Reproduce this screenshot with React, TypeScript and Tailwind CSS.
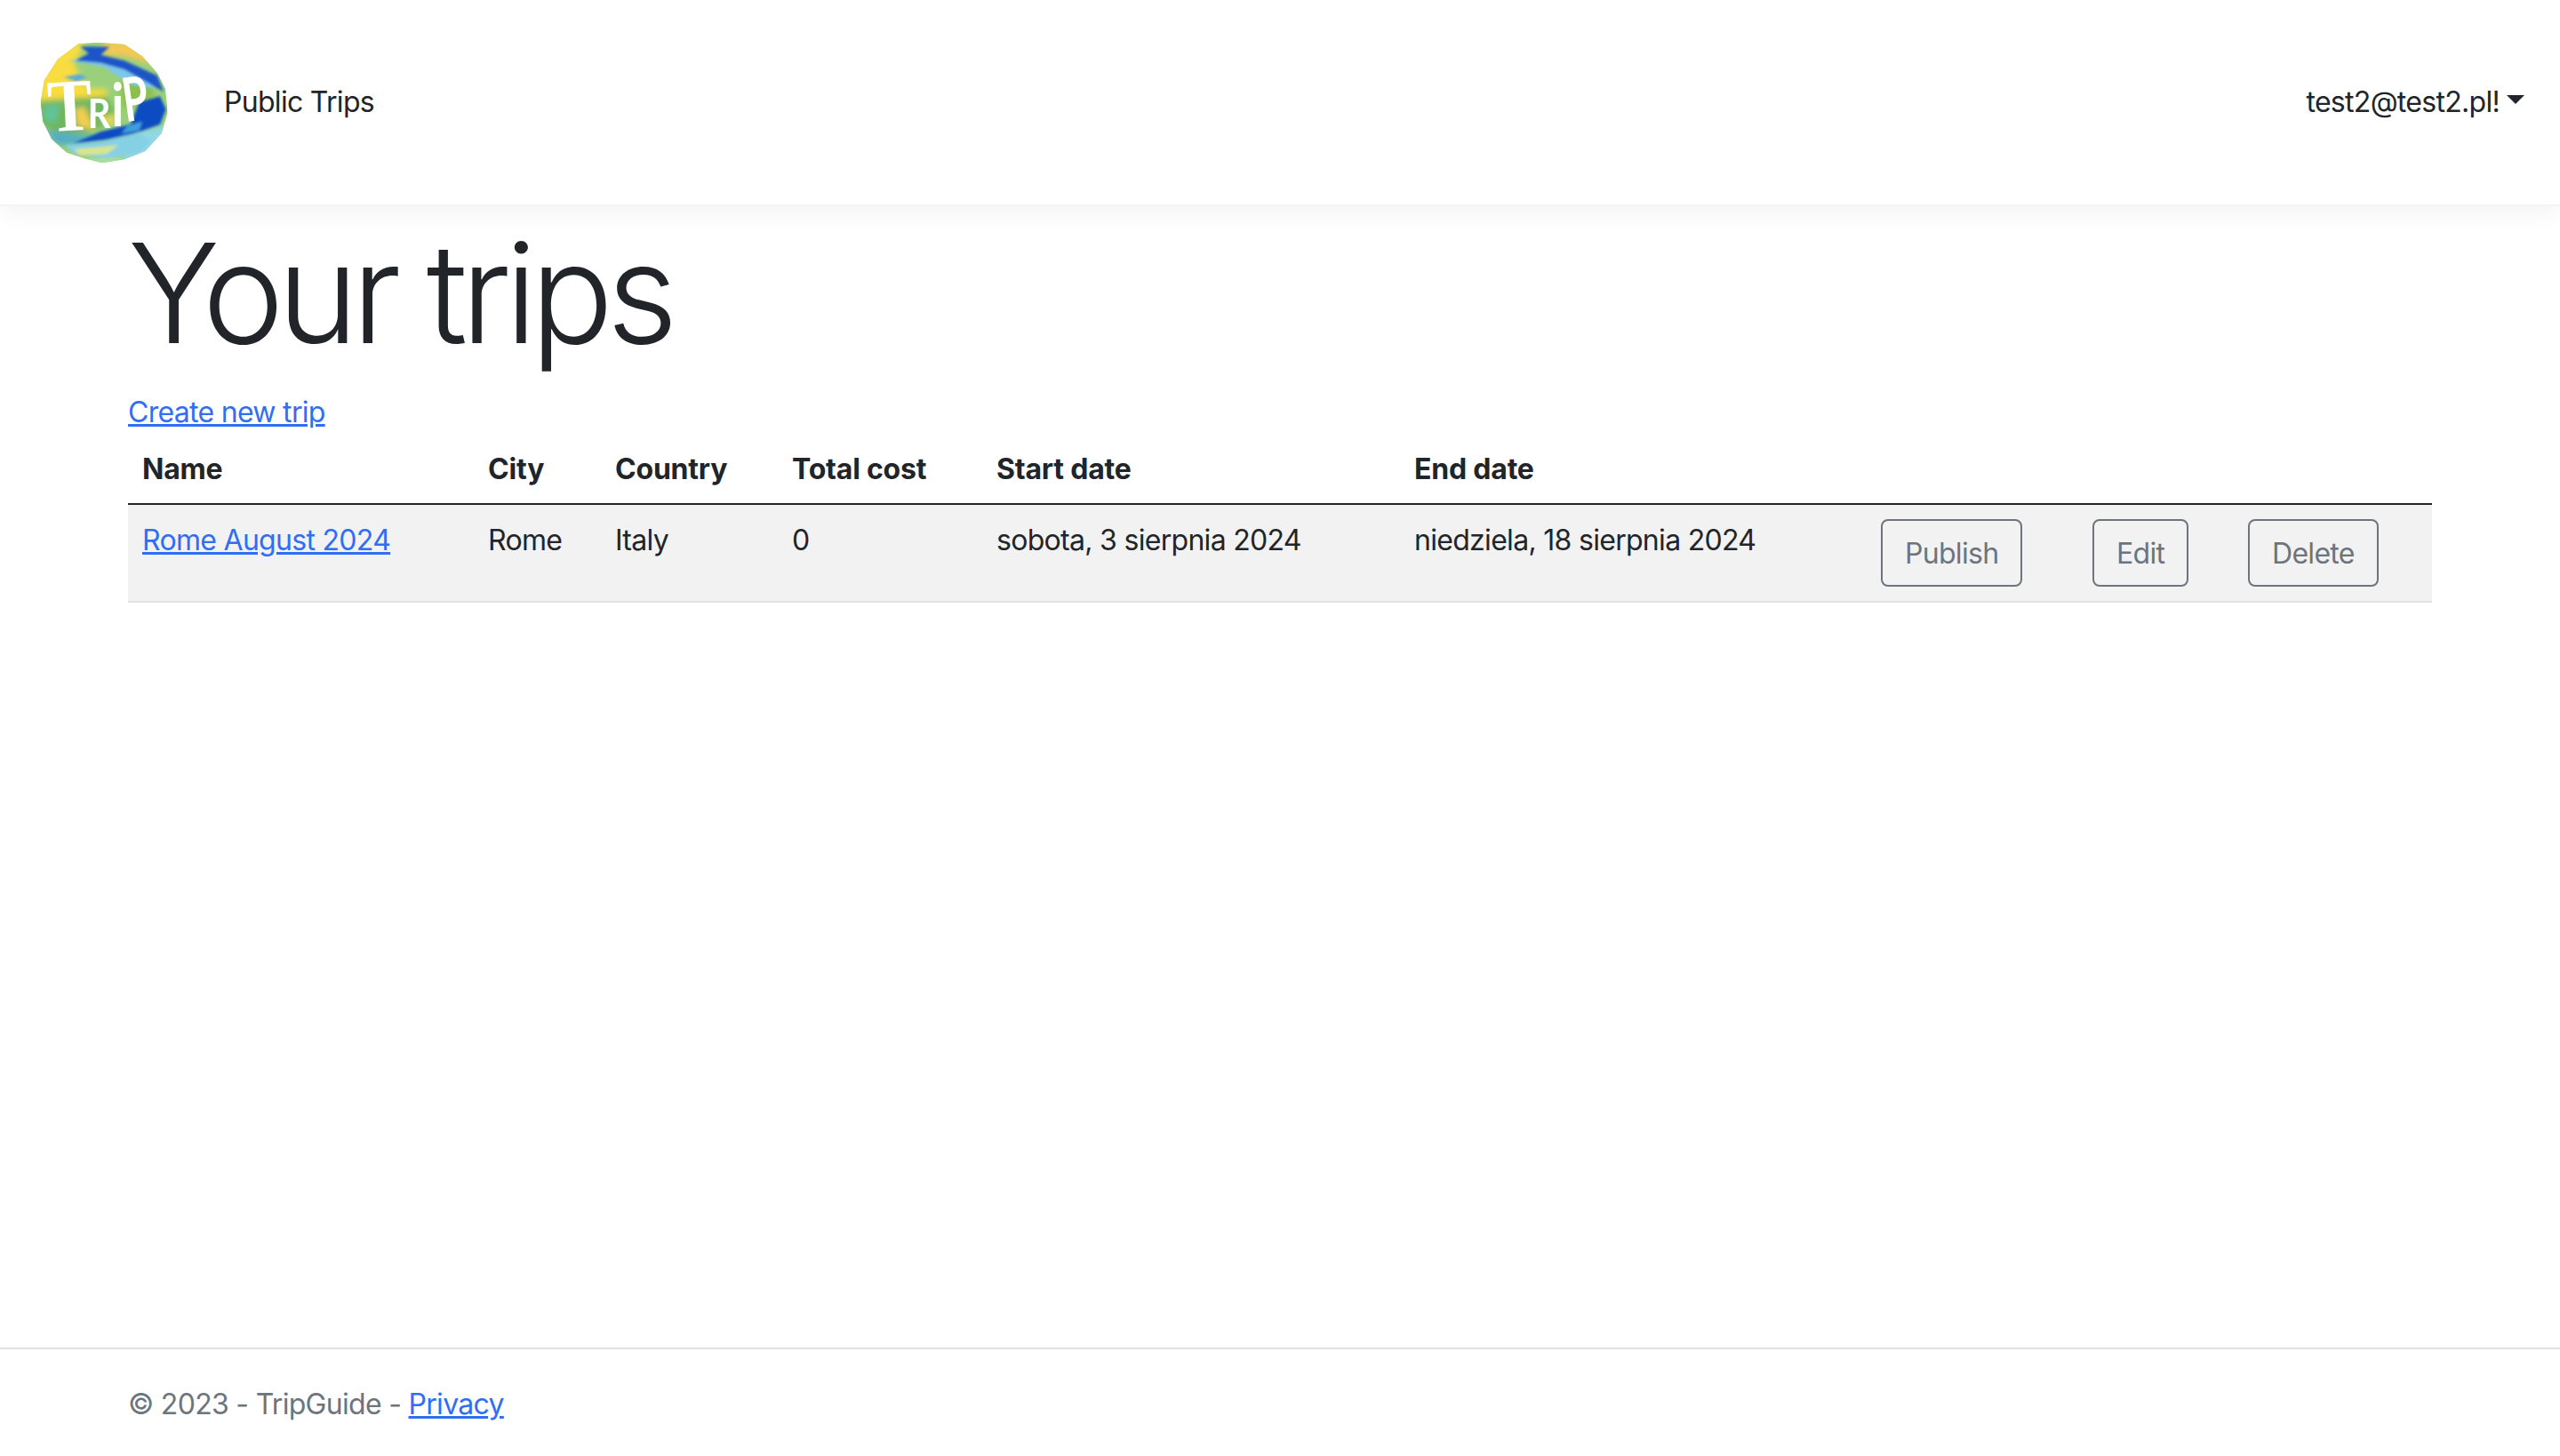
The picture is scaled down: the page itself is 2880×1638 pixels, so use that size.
const Logo = () => (
    <svg width="155" height="145" viewBox="120 129 465 435" className="shrink-0">
        <defs>
            <clipPath id="blob">
                <path d="M265 148 L330 143 L420 150 L480 190 L530 245 L558 300 L566 380 L545 450 L490 510 L420 538 L345 550 L285 535 L225 515 L175 470 L145 410 L137 345 L150 270 L195 200 Z" />
            </clipPath>
            <filter id="soft" x="-20%" y="-20%" width="140%" height="140%">
                <feGaussianBlur stdDeviation="9" />
            </filter>
            <filter id="softer" x="-20%" y="-20%" width="140%" height="140%">
                <feGaussianBlur stdDeviation="4" />
            </filter>
        </defs>
        <g clipPath="url(#blob)">
            <rect x="120" y="129" width="465" height="435" fill="#9ad07c" />
            <g filter="url(#soft)">
                <path d="M130 140 L290 140 L250 220 L300 300 L360 300 L360 335 L130 345 Z" fill="#f8dc3f" />
                <path d="M350 140 L500 140 L510 215 L420 190 L340 185 Z" fill="#f5c853" />
                <path d="M130 340 L360 325 L400 400 L300 450 L200 450 L130 420 Z" fill="#6fb65e" />
                <path d="M250 370 L285 360 L320 440 L262 425 Z" fill="#f4cf4f" />
                <path d="M400 280 L510 265 L520 330 L420 370 Z" fill="#8cc04a" />
                <path d="M340 395 L400 385 L370 430 Z" fill="#ecd95c" />
                <path d="M150 360 L200 350 L190 410 L150 410 Z" fill="#5fc59a" />
                <path d="M470 440 L580 420 L580 560 L400 560 Z" fill="#8fd8e6" />
                <path d="M150 440 L320 460 L460 420 L460 460 L250 490 L190 490 Z" fill="#53aec4" />
            </g>
            <g filter="url(#softer)">
                <path d="M230 205 L350 225 L440 285 L520 300 L500 255 L400 215 L300 195 Z" fill="#7cc8ea" />
                <path d="M270 157 L370 158 L340 185 L420 205 L530 255 L552 310 L500 280 L420 235 L340 212 L255 205 L300 180 Z" fill="#1a55c8" />
                <path d="M215 260 L270 250 L295 262 L260 275 Z" fill="#5cabdc" />
                <path d="M470 345 L540 325 L560 370 L540 420 L470 445 L360 470 L245 485 L340 445 L440 420 Z" fill="#0f4cc2" />
                <path d="M430 425 L480 410 L470 440 L410 450 Z" fill="#3f9fdc" />
                <path d="M220 490 L350 478 L470 450 L510 475 L470 515 L360 535 L250 520 Z" fill="#86d0e6" />
                <path d="M250 503 L400 490 L360 520 L270 525 Z" fill="#d8e58e" />
                <path d="M290 535 L420 530 L380 552 L320 552 Z" fill="#a7dea0" />
            </g>
        </g>
        <text x="160" y="440" fill="#fff" textLength="150" lengthAdjust="spacingAndGlyphs" transform="rotate(-3 235 350)" className="font-['Liberation_Serif',serif] text-[250px] font-bold">T</text>
        <text x="296" y="432" fill="#fff" textLength="76" lengthAdjust="spacingAndGlyphs" className="font-['Lato',sans-serif] text-[140px] font-bold">R</text>
        <text x="376" y="425" fill="#fff" textLength="42" lengthAdjust="spacingAndGlyphs" className="font-['Lato',sans-serif] text-[200px] font-bold">i</text>
        <text x="0" y="0" fill="#fff" textLength="86" lengthAdjust="spacingAndGlyphs" transform="translate(424 412) rotate(-8)" className="font-['Lato',sans-serif] text-[205px] font-bold">P</text>
    </svg>
);

const Button = ({ label }: { label: string }) => (
    <button className="h-[76px] rounded-[8px] border-2 border-[#6c757d] px-[25px] pt-[1px] text-[32px] leading-[48px] text-[#6c757d]">
        {label}
    </button>
);

const App = () => {
    return (
        <div className="flex min-h-[1638px] flex-col bg-white font-['Inter',sans-serif] text-[32px] leading-[48px] tracking-[-0.7px] text-[#212529]">
            <nav className="flex h-[232px] items-center border-b-2 border-[#f4f4f4] pl-[40px] pr-[40px] shadow-[0_8px_24px_rgba(0,0,0,0.05)]">
                <Logo />
                <a className="ml-[57px]">Public Trips</a>
                <div className="ml-auto flex items-center">
                    <span>test2@test2.pl!</span>
                    <span className="ml-[8px] mt-[-6px] border-x-[10px] border-t-[10px] border-x-transparent border-t-[#212529]" />
                </div>
            </nav>

            <main className="flex-1 px-[144px]">
                <h1 className="pt-[3px] text-[155px] font-light leading-[189px] tracking-[-7.6px]">Your trips</h1>
                <p className="mt-[16px]">
                    <a className="text-[#2f6ef5] underline">Create new trip</a>
                </p>
                <table className="w-[2592px] table-fixed border-collapse text-left">
                    <colgroup>
                        <col className="w-[389px]" />
                        <col className="w-[143px]" />
                        <col className="w-[199px]" />
                        <col className="w-[230px]" />
                        <col className="w-[470px]" />
                        <col className="w-[525px]" />
                        <col className="w-[238px]" />
                        <col className="w-[175px]" />
                        <col className="w-[223px]" />
                    </colgroup>
                    <thead>
                        <tr className="border-b-2 border-[#212529]">
                            <th className="px-[16px] pt-[16px] pb-[14px] font-bold tracking-[-0.2px]">Name</th>
                            <th className="px-[16px] pt-[16px] pb-[14px] font-bold tracking-[-0.2px]">City</th>
                            <th className="px-[16px] pt-[16px] pb-[14px] font-bold tracking-[-0.2px]">Country</th>
                            <th className="px-[16px] pt-[16px] pb-[14px] font-bold tracking-[-0.2px]">Total cost</th>
                            <th className="px-[16px] pt-[16px] pb-[14px] font-bold tracking-[-0.2px]">Start date</th>
                            <th className="px-[16px] pt-[16px] pb-[14px] font-bold tracking-[-0.2px]">End date</th>
                            <th />
                            <th />
                            <th />
                        </tr>
                    </thead>
                    <tbody>
                        <tr className="border-b-2 border-[#dee2e6] bg-[#f2f2f2] align-top">
                            <td className="p-[16px]">
                                <a className="text-[#2f6ef5] underline">Rome August 2024</a>
                            </td>
                            <td className="p-[16px]">Rome</td>
                            <td className="p-[16px]">Italy</td>
                            <td className="p-[16px]">0</td>
                            <td className="p-[16px]">sobota, 3 sierpnia 2024</td>
                            <td className="p-[16px]">niedziela, 18 sierpnia 2024</td>
                            <td className="p-[16px]"><Button label="Publish" /></td>
                            <td className="p-[16px]"><Button label="Edit" /></td>
                            <td className="p-[16px]"><Button label="Delete" /></td>
                        </tr>
                    </tbody>
                </table>
            </main>

            <footer className="border-t-2 border-[#dee2e6] px-[144px] pt-[4px] leading-[116px] text-[#6c757d]">
                © 2023 - TripGuide - <a className="text-[#2f6ef5] underline">Privacy</a>
            </footer>
        </div>
    );
};

export default App;
